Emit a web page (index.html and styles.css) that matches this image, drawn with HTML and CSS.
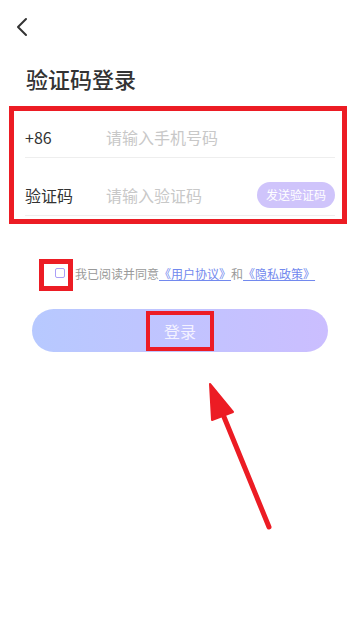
FILE: index.html
```html
<!DOCTYPE html>
<html lang="zh-CN">
<head>
  <meta charset="UTF-8">
  <title>验证码登录</title>
  <link rel="stylesheet" href="styles.css">
</head>
<body>
  <div class="page">
    <div class="topbar">
      <svg class="back" width="12" height="20" viewBox="0 0 12 20">
        <polyline points="10,2 2,10 10,18" fill="none" stroke="#333" stroke-width="2" stroke-linecap="round" stroke-linejoin="round"/>
      </svg>
    </div>

    <h1 class="title">验证码登录</h1>

    <div class="form">
      <div class="row first">
        <span class="label">+86</span>
        <span class="placeholder">请输入手机号码</span>
      </div>
      <div class="row second">
        <span class="label">验证码</span>
        <span class="placeholder">请输入验证码</span>
        <button class="send-btn">发送验证码</button>
      </div>
    </div>

    <div class="agree">
      <span class="check"></span>
      <span class="agree-text">我已阅读并同意<a class="link">《用户协议》</a>和<a class="link">《隐私政策》</a></span>
    </div>

    <button class="login-btn">登录</button>
  </div>

  <!-- annotation layer -->
  <div class="mark mark-form"></div>
  <div class="mark mark-check"></div>
  <div class="mark mark-login"></div>
  <svg class="arrow" width="360" height="619" viewBox="0 0 360 619">
    <line x1="269" y1="527" x2="222" y2="412" stroke="#ec1c24" stroke-width="5" stroke-linecap="round"/>
    <polygon points="210,384 233,412 212,420" fill="#ec1c24" stroke="#ec1c24" stroke-width="2" stroke-linejoin="round"/>
  </svg>
</body>
</html>
```

FILE: styles.css
```css
body {
  margin: 0;
  background: #fff;
  font-family: "Noto Sans CJK SC", "Noto Sans", sans-serif;
  width: 360px;
  height: 619px;
  position: relative;
  overflow: hidden;
}
.page {
  padding: 0 25px;
}
.topbar {
  padding-top: 17px;
  height: 19px;
}
.back {
  display: block;
  margin-left: -9px;
}
.title {
  margin: 27px 0 0 1px;
  font-size: 22px;
  line-height: 30px;
  font-weight: 500;
  color: #333;
}
.form {
  margin-top: 23px;
}
.row {
  display: flex;
  align-items: center;
  border-bottom: 1px solid #eeeeee;
  font-size: 16px;
}
.row.first {
  height: 41px;
}
.row.second {
  height: 40px;
  margin-top: 17px;
}
.label {
  width: 81px;
  color: #333;
}
.placeholder {
  flex: 1;
  color: #c8c8c8;
}
.send-btn {
  border: none;
  height: 26px;
  padding: 0 9px;
  border-radius: 13px;
  background: #cfc4fb;
  color: #fff;
  font-family: inherit;
  font-size: 12px;
  line-height: 26px;
}
.agree {
  display: flex;
  align-items: center;
  margin-top: 47px;
  padding-left: 30px;
  height: 20px;
}
.check {
  width: 8px;
  height: 8px;
  border: 1.5px solid #aa9ef7;
  border-radius: 2px;
  margin-right: 10px;
}
.agree-text {
  font-size: 12px;
  color: #999;
}
.link {
  color: #7289ee;
  text-decoration: underline;
}
.login-btn {
  display: block;
  width: 296px;
  height: 43px;
  margin: 26px 0 0 7px;
  border: none;
  border-radius: 22px;
  background: linear-gradient(90deg, #b7c9ff, #cbbeff);
  color: #f4f2ff;
  font-family: inherit;
  font-size: 16px;
}
.mark {
  position: absolute;
  border: 5px solid #ec1c24;
  box-sizing: border-box;
}
.mark-form {
  left: 9px;
  top: 106px;
  width: 338px;
  height: 118px;
}
.mark-check {
  left: 39px;
  top: 259px;
  width: 34px;
  height: 32px;
}
.mark-login {
  left: 146px;
  top: 311px;
  width: 68px;
  height: 40px;
  border-width: 4px;
}
.arrow {
  position: absolute;
  left: 0;
  top: 0;
}
```
